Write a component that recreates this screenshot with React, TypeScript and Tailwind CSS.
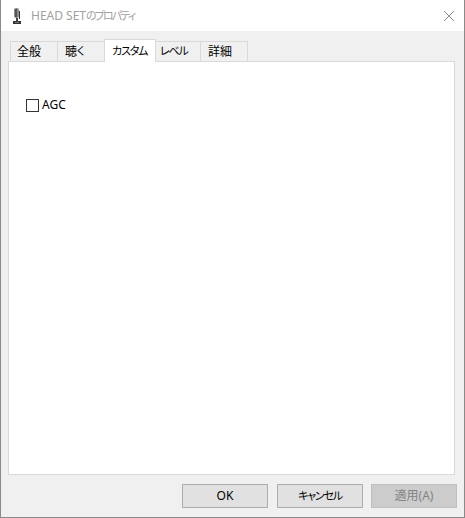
function Kana({ children }: { children: string }) {
  return <span className="text-[11px] tracking-[-1.2px]">{children}</span>;
}

export default function App() {
  const font = "font-['Noto_Sans','Noto_Sans_CJK_JP',sans-serif] [font-feature-settings:'palt'] whitespace-nowrap";
  const tab = "h-[20px] border-t border-r border-[#d9d9d9] bg-[#f0f0f0] flex items-center text-[12px] text-black";
  const btn = "w-[86px] h-[24px] border border-[#adadad] bg-[#e1e1e1] flex items-center justify-center text-[12px] text-black";
  return (
    <div className={`w-[465px] h-[518px] bg-white overflow-hidden ${font}`}>
      <div className="w-[465px] h-[518px] border-l border-r border-b border-[#8a8a88] flex flex-col">
        <div className="h-[31px] bg-white flex items-center shrink-0">
          <svg width="16" height="18" viewBox="0 0 16 18" className="ml-[8px] shrink-0">
            <rect x="5" y="1" width="5" height="10" rx="2" fill="#8c8c8c" />
            <rect x="6" y="2" width="2" height="8" fill="#555" />
            <rect x="10" y="4" width="1" height="8" fill="#333" />
            <rect x="7" y="11" width="2" height="3" fill="#444" />
            <rect x="4" y="14" width="8" height="3" fill="#333" />
            <rect x="6" y="15" width="4" height="1" fill="#777" />
          </svg>
          <span className="ml-[6px] text-[12px] text-[#a0a0a0] leading-none">HEAD SET<span className="text-[11px] tracking-[-1.9px]">のプロパティ</span></span>
          <svg width="12" height="12" viewBox="0 0 12 12" className="ml-auto mr-[9px] shrink-0">
            <path d="M1 1 L11 11 M11 1 L1 11" stroke="#8c8c8c" strokeWidth="1" fill="none" />
          </svg>
        </div>
        <div className="flex-1 bg-[#f0f0f0] flex flex-col pl-[7px] pr-[7px]">
          <div className="h-[30px] flex items-end shrink-0 pl-[2px]">
            <div className={`${tab} w-[48px] border-l pl-[6px]`}>全般</div>
            <div className={`${tab} w-[47px] pl-[7px]`}>聴<Kana>く</Kana></div>
            <div className="w-[52px] h-[23px] -ml-[1px] -mb-[1px] z-10 border-t border-l border-r border-[#d9d9d9] bg-white flex items-center pl-[7px] text-[12px] text-black"><Kana>カスタム</Kana></div>
            <div className={`${tab} w-[46px] -ml-[1px] pl-[5px]`}><Kana>レベル</Kana></div>
            <div className={`${tab} w-[47px] pl-[7px]`}>詳細</div>
          </div>
          <div className="w-[447px] h-[414px] border border-[#d9d9d9] bg-white shrink-0 pt-[36px] pl-[17px]">
            <div className="flex items-center gap-[3px]">
              <div className="w-[13px] h-[13px] border border-[#333333] bg-white" />
              <span className="text-[12px] leading-[14px] text-black">AGC</span>
            </div>
          </div>
          <div className="flex justify-end pt-[9px]">
            <div className={btn}>OK</div>
            <div className={`${btn} ml-[9px]`}><Kana>キャンセル</Kana></div>
            <div className="ml-[8px] w-[86px] h-[24px] border border-[#bfbfbf] bg-[#cccccc] flex items-center justify-center text-[12px] text-[#838383]">適用(A)</div>
          </div>
        </div>
      </div>
    </div>
  );
}
